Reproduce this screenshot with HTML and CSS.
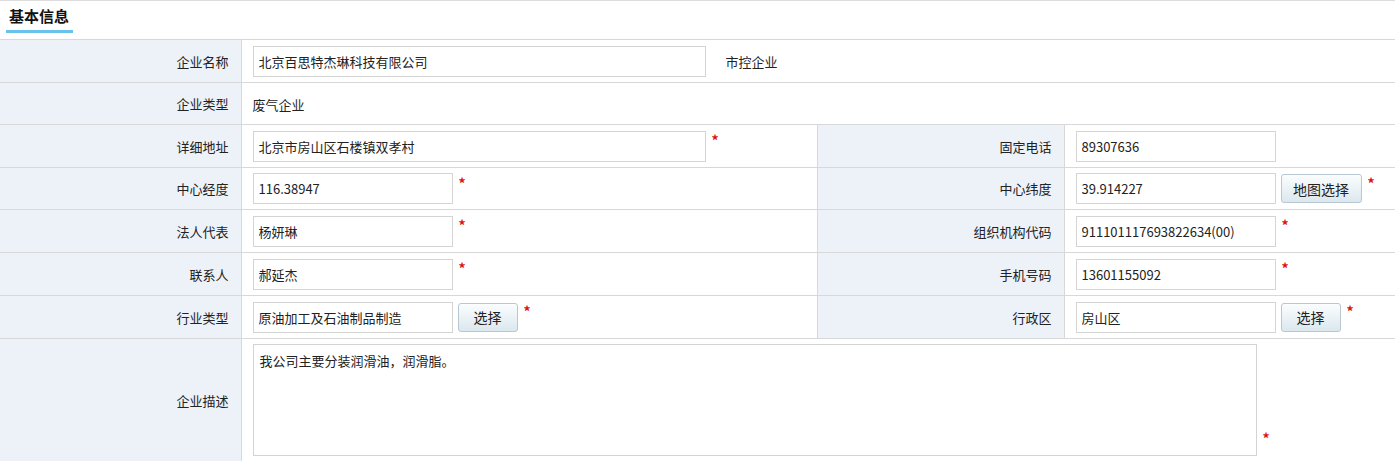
FILE: index.html
```html
<!DOCTYPE html>
<html lang="zh">
<head>
<meta charset="utf-8">
<link rel="stylesheet" href="styles.css">
</head>
<body>
<div class="panel">
  <div class="panel-head"><span class="panel-title">基本信息</span></div>
  <table class="form">
    <colgroup><col class="c1"><col class="c2"><col class="c3"><col class="c4"></colgroup>
    <tr>
      <th>企业名称</th>
      <td colspan="3"><input class="ipt long" value="北京百思特杰琳科技有限公司"><span class="note">市控企业</span></td>
    </tr>
    <tr class="short">
      <th>企业类型</th>
      <td colspan="3"><span class="plain">废气企业</span></td>
    </tr>
    <tr>
      <th>详细地址</th>
      <td><input class="ipt long" value="北京市房山区石楼镇双孝村"><span class="req">*</span></td>
      <th>固定电话</th>
      <td><input class="ipt" value="89307636"></td>
    </tr>
    <tr class="short">
      <th>中心经度</th>
      <td><input class="ipt" value="116.38947"><span class="req">*</span></td>
      <th>中心纬度</th>
      <td><input class="ipt" value="39.914227"><button class="btn wide">地图选择</button><span class="req">*</span></td>
    </tr>
    <tr>
      <th>法人代表</th>
      <td><input class="ipt" value="杨妍琳"><span class="req">*</span></td>
      <th>组织机构代码</th>
      <td><input class="ipt" value="911101117693822634(00)"><span class="req">*</span></td>
    </tr>
    <tr>
      <th>联系人</th>
      <td><input class="ipt" value="郝延杰"><span class="req">*</span></td>
      <th>手机号码</th>
      <td><input class="ipt" value="13601155092"><span class="req">*</span></td>
    </tr>
    <tr>
      <th>行业类型</th>
      <td><input class="ipt" value="原油加工及石油制品制造"><button class="btn">选择</button><span class="req">*</span></td>
      <th>行政区</th>
      <td><input class="ipt" value="房山区"><button class="btn">选择</button><span class="req">*</span></td>
    </tr>
    <tr class="tall">
      <th>企业描述</th>
      <td colspan="3"><div class="area-wrap"><textarea class="area">我公司主要分装润滑油，润滑脂。</textarea><span class="req low">*</span></div></td>
    </tr>
  </table>
</div>
</body>
</html>
```
FILE: styles.css
```css
* { box-sizing: border-box; }
html, body { margin: 0; padding: 0; background: #fff; }
body {
  font-family: "Noto Sans CJK SC", "Noto Sans", sans-serif;
  font-size: 13px;
  color: #222;
}
.panel { width: 1395px; border-top: 1px solid #dcdcdc; }
.panel-head { height: 38px; padding-left: 6px; }
.panel-title {
  display: inline-block;
  font-size: 15px;
  font-weight: bold;
  color: #111;
  padding: 3px 3px 0 3px;
  width: 67px;
  height: 32px;
  line-height: 24px;
  border-bottom: 3px solid #6ac3ec;
}
.form {
  width: 1395px;
  border-collapse: collapse;
  table-layout: fixed;
}
.c1 { width: 241px; }
.c2 { width: 576px; }
.c3 { width: 247px; }
.c4 { width: 331px; }
.form tr { height: 43px; }
.form tr.short { height: 42px; }
.form th, .form td {
  border-top: 1px solid #d8d8d8;
  border-bottom: 1px solid #d8d8d8;
  padding: 0;
  vertical-align: middle;
}
.form th {
  background: #edf1f8;
  font-weight: normal;
  text-align: right;
  padding-right: 12px;
  border-right: 1px solid #d8d8d8;
  white-space: nowrap;
}
.form td { padding-left: 11px; white-space: nowrap; }
.form td + th { border-left: 1px solid #d8d8d8; }
.ipt {
  font: inherit;
  color: #222;
  width: 200px;
  height: 31px;
  border: 1px solid #d4d4d4;
  padding: 0 5px;
  vertical-align: middle;
  background: #fff;
}
.ipt.long { width: 453px; }
.note { margin-left: 20px; vertical-align: middle; }
.plain { vertical-align: middle; }
.req {
  color: #e01010;
  font-size: 14px;
  font-weight: bold;
  margin-left: 6px;
  vertical-align: middle;
  position: relative;
  top: -6px;
}
.btn {
  font: inherit;
  font-size: 14px;
  color: #222;
  height: 29px;
  width: 60px;
  margin-left: 5px;
  padding: 0;
  border: 1px solid #b9c7d2;
  border-radius: 3px;
  background: linear-gradient(#fbfdfe, #dbe8ee);
  vertical-align: middle;
}
.btn.wide { width: 81px; }
.tall { height: 123px !important; }
.area-wrap { display: flex; align-items: flex-end; padding: 5px 0 5px 0; }
.area {
  font: inherit;
  color: #222;
  width: 1004px;
  height: 112px;
  border: 1px solid #d4d4d4;
  padding: 6px 6px;
  resize: none;
  display: block;
}
.req.low { top: 0; margin-bottom: 8px; }
```
